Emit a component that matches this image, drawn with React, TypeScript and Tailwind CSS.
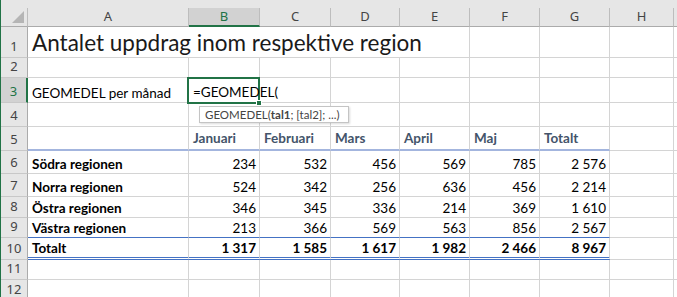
import React from 'react';

const colW = ['w-[161px]', 'w-[71px]', 'w-[71px]', 'w-[69px]', 'w-[70px]', 'w-[70px]', 'w-[70px]', 'w-[64px]'];
const letters = ['A', 'B', 'C', 'D', 'E', 'F', 'G', 'H'];

const GRID_B = 'border-b border-b-[#d4d4d4]';

type RowProps = {
  n: number;
  h: string;
  edge?: string;
  active?: boolean;
  noRight?: number[];
  children?: React.ReactNode[];
};

const Row: React.FC<RowProps> = ({ n, h, edge = GRID_B, active = false, noRight = [], children = [] }) => (
  <div className={`flex ${h}`}>
    <div
      className={`w-[27px] shrink-0 h-full flex items-end justify-center pb-[1px] text-[13px] font-['Noto_Sans',sans-serif] border-b border-b-[#c8c8c8] ${
        active ? 'bg-[#d2d2d2] text-[#217346] border-r-2 border-r-[#217346]' : 'bg-[#e6e6e6] text-[#444] border-r border-r-[#ababab]'
      }`}
    >
      {n}
    </div>
    {colW.map((w, i) => (
      <div
        key={i}
        className={`${w} shrink-0 h-full ${i < 7 ? edge : GRID_B} ${noRight.includes(i) ? '' : 'border-r border-r-[#d4d4d4]'} whitespace-nowrap`}
      >
        {children[i]}
      </div>
    ))}
    <div className={`flex-1 h-full ${GRID_B}`} />
  </div>
);

const Label: React.FC<{ children: React.ReactNode; bold?: boolean }> = ({ children, bold }) => (
  <div className={`h-full flex items-end pl-[4px] leading-[17px] text-[13.5px] text-black ${bold ? 'font-bold' : ''}`}>{children}</div>
);

const Num: React.FC<{ children: React.ReactNode; bold?: boolean }> = ({ children, bold }) => (
  <div className={`h-full flex items-end justify-end pr-[3px] leading-[17px] text-[13.5px] text-black ${bold ? 'font-bold' : ''}`}>{children}</div>
);

const Head: React.FC<{ children: React.ReactNode }> = ({ children }) => (
  <div className="h-full flex items-end pl-[4px] pb-[2px] leading-[17px] text-[13.5px] font-bold text-[#44546a]">{children}</div>
);

const data: [string, string[]][] = [
  ['Södra regionen', ['234', '532', '456', '569', '785', '2 576']],
  ['Norra regionen', ['524', '342', '256', '636', '456', '2 214']],
  ['Östra regionen', ['346', '345', '336', '214', '369', '1 610']],
  ['Västra regionen', ['213', '366', '569', '563', '856', '2 567']],
];
const heights = ['h-[23px]', 'h-[23px]', 'h-[21px]', 'h-[20px]'];

export default function App() {
  return (
    <div className="relative w-[677px] h-[297px] overflow-hidden bg-white border-l border-l-[#217346] font-['Lato',sans-serif]">
      {/* column headers */}
      <div className="flex h-[27px] bg-[#e6e6e6] pt-[8px]">
        <div className="w-[27px] shrink-0 h-full border-r border-r-[#bdbdbd] border-b border-b-[#ababab] flex items-end justify-end pr-[3px] pb-[3px]">
          <svg width="12" height="12" viewBox="0 0 12 12">
            <polygon points="12,0 12,12 0,12" fill="#b5b5b5" />
          </svg>
        </div>
        {colW.map((w, i) => (
          <div
            key={i}
            className={`${w} shrink-0 h-full flex items-center justify-center text-[13px] font-['Noto_Sans',sans-serif] border-r border-r-[#bdbdbd] ${
              i === 1 ? 'bg-[#d2d2d2] text-[#217346] border-b-2 border-b-[#217346]' : 'text-[#444] border-b border-b-[#ababab]'
            }`}
          >
            {letters[i]}
          </div>
        ))}
        <div className="flex-1 h-full border-b border-b-[#ababab]" />
      </div>

      <Row n={1} h="h-[31px]" noRight={[0, 1, 2, 3]}>
        {[
          <div key="t" className="h-full flex items-end pl-[4px] leading-[28px] text-[22.5px] text-[#1a1a1a]">
            Antalet uppdrag inom respektive region
          </div>,
        ]}
      </Row>
      <Row n={2} h="h-[20px]" />
      <Row n={3} h="h-[25px]" active>
        {[
          <Label key="a">GEOMEDEL per månad</Label>,
          <div key="b" className="relative z-10 h-full flex items-end pl-[4px] pb-[1px] leading-[17px] text-[13.5px] text-black">
            =GEOMEDEL(<span className="inline-block w-px h-[17px] bg-black ml-[1px]" />
          </div>,
        ]}
      </Row>
      <Row n={4} h="h-[24px]" />
      <Row n={5} h="h-[24px]" edge="border-b-2 border-b-[#a3b5de]">
        {['', 'Januari', 'Februari', 'Mars', 'April', 'Maj', 'Totalt'].map((t, i) => (
          <Head key={i}>{t}</Head>
        ))}
      </Row>
      {data.map(([name, vals], r) => (
        <Row key={name} n={6 + r} h={heights[r]} edge={r === 3 ? 'border-b border-b-[#4472c4]' : GRID_B}>
          {[<Label key="l" bold>{name}</Label>, ...vals.map((v, i) => <Num key={i}>{v}</Num>)]}
        </Row>
      ))}
      <Row n={10} h="h-[22px]" edge="border-b-[3px] border-double border-b-[#4472c4]">
        {[
          <Label key="l" bold>Totalt</Label>,
          ...['1 317', '1 585', '1 617', '1 982', '2 466', '8 967'].map((v, i) => (
            <Num key={i} bold>{v}</Num>
          )),
        ]}
      </Row>
      <Row n={11} h="h-[20px]" />
      <Row n={12} h="h-[21px]" />

      {/* active cell B3 */}
      <div className="absolute left-[186px] top-[77px] w-[73px] h-[27px] border-2 border-[#217346] pointer-events-none" />
      <div className="absolute left-[255px] top-[100px] w-[6px] h-[6px] bg-[#217346] border border-white" />

      {/* function tooltip */}
      <div className="absolute left-[198px] top-[106px] w-[150px] h-[17px] pl-[5px] flex items-center bg-white border border-[#c4c4c4] shadow-[1px_1px_2px_rgba(0,0,0,0.15)] text-[11.5px] text-[#444] font-['Lato',sans-serif] whitespace-nowrap">
        GEOMEDEL(<span className="font-bold">tal1</span>; [tal2]; ...)
      </div>
    </div>
  );
}
